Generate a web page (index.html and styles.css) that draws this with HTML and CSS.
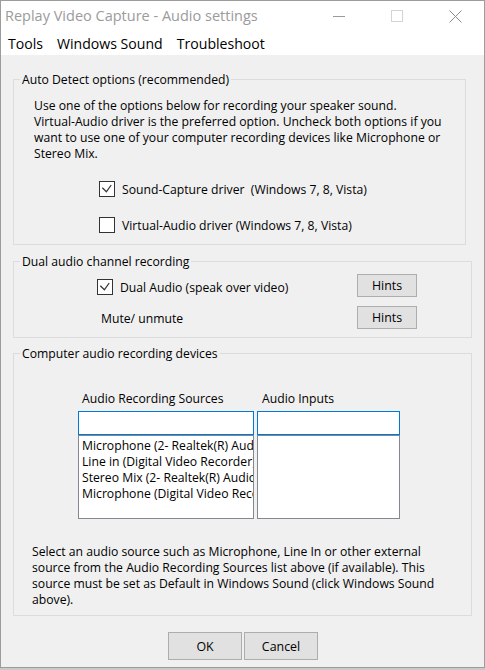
FILE: index.html
```html
<!DOCTYPE html>
<html>
<head>
<meta charset="utf-8">
<title>Replay Video Capture - Audio settings</title>
<link rel="stylesheet" href="styles.css">
</head>
<body>
<div class="win">
  <div class="titlebar">
    <div class="title">Replay Video Capture - Audio settings</div>
    <div class="capbtn">
      <svg width="12" height="12" viewBox="0 0 12 12"><line x1="0" y1="6.5" x2="12" y2="6.5" stroke="#9a9a9a" stroke-width="1"/></svg>
    </div>
    <div class="capbtn">
      <svg width="12" height="12" viewBox="0 0 12 12"><rect x="0.5" y="0.5" width="11" height="11" fill="none" stroke="#d4d4d4" stroke-width="1"/></svg>
    </div>
    <div class="capbtn">
      <svg width="13" height="13" viewBox="0 0 13 13"><path d="M0.5 0.5 L12.5 12.5 M12.5 0.5 L0.5 12.5" stroke="#8a8a8a" stroke-width="1" fill="none"/></svg>
    </div>
  </div>
  <div class="menubar">
    <span class="menuitem">Tools</span>
    <span class="menuitem">Windows Sound</span>
    <span class="menuitem">Troubleshoot</span>
  </div>
  <div class="content">
    <div class="group g1">
      <div class="legend">Auto Detect options (recommended)</div>
      <p class="desc">Use one of the options below for recording your speaker sound.<br>Virtual-Audio driver is the preferred option. Uncheck both options if you<br>want to use one of your computer recording devices like Microphone or<br>Stereo Mix.</p>
      <div class="checkrow first">
        <span class="box checked"><svg width="14" height="14" viewBox="0 0 14 14"><path d="M2.3 5.8 L6.4 9.8 L11.2 3" fill="none" stroke="#3a3a3a" stroke-width="1.3"/></svg></span>
        <span class="lbl">Sound-Capture driver&nbsp; (Windows 7, 8, Vista)</span>
      </div>
      <div class="checkrow second">
        <span class="box"></span>
        <span class="lbl">Virtual-Audio driver (Windows 7, 8, Vista)</span>
      </div>
    </div>

    <div class="group g2">
      <div class="legend">Dual audio channel recording</div>
      <div class="dualrow r1">
        <div class="left">
          <span class="box checked"><svg width="14" height="14" viewBox="0 0 14 14"><path d="M2.3 5.8 L6.4 9.8 L11.2 3" fill="none" stroke="#3a3a3a" stroke-width="1.3"/></svg></span>
          <span class="lbl">Dual Audio (speak over video)</span>
        </div>
        <button class="btn hints">Hints</button>
      </div>
      <div class="dualrow r2">
        <div class="left mute">Mute/ unmute</div>
        <button class="btn hints">Hints</button>
      </div>
    </div>

    <div class="group g3">
      <div class="legend">Computer audio recording devices</div>
      <div class="cols">
        <div class="col c1">
          <div class="collabel">Audio Recording Sources</div>
          <div class="edit"></div>
          <div class="list">
            <div class="item">Microphone (2- Realtek(R) Audio)</div>
            <div class="item">Line in (Digital Video Recorder)</div>
            <div class="item">Stereo Mix (2- Realtek(R) Audio)</div>
            <div class="item">Microphone (Digital Video Recorder)</div>
          </div>
        </div>
        <div class="col c2">
          <div class="collabel l2">Audio Inputs</div>
          <div class="edit"></div>
          <div class="list"></div>
        </div>
      </div>
      <p class="note">Select an audio source such as Microphone, Line In or other external<br>source from the Audio Recording Sources list above (if available). This<br>source must be set as Default in Windows Sound (click Windows Sound<br>above).</p>
    </div>

    <div class="actions">
      <button class="btn big">OK</button>
      <button class="btn big">Cancel</button>
    </div>
  </div>
</div>
</body>
</html>
```
FILE: styles.css
```css
html, body {
  margin: 0;
  padding: 0;
}
body {
  background: #c9c9c9;
  font-family: "Open Sans", "Noto Sans", sans-serif;
  color: #000;
}
.win {
  width: 485px;
  height: 668px;
  box-sizing: border-box;
  border: 1px solid #9c9c9c;
  background: #f0f0f0;
  display: flex;
  flex-direction: column;
  overflow: hidden;
}
.titlebar {
  height: 30px;
  background: #fff;
  display: flex;
  align-items: center;
}
.title {
  flex: 1;
  padding-left: 4px;
  font-size: 14.5px;
  color: #9b9b9b;
  line-height: 30px;
  white-space: nowrap;
}
.capbtn {
  width: 58px;
  height: 30px;
  display: flex;
  align-items: center;
  justify-content: center;
}
.capbtn svg { display: block; }
.menubar {
  height: 24px;
  background: #fff;
  display: flex;
  box-sizing: border-box;
  padding-top: 2px;
}
.menuitem {
  padding: 0 7px;
  font-size: 14.1px;
  line-height: 22px;
  white-space: nowrap;
}
.content {
  flex: 1;
  padding: 0 12px;
  font-size: 12.2px;
  line-height: 16px;
}
.group {
  border: 1px solid #dcdcdc;
}
.g1 {
  width: 453px;
  box-sizing: border-box;
  margin-top: 24px;
  padding-bottom: 11px;
}
.g2 {
  width: 459px;
  box-sizing: border-box;
  margin-top: 16px;
  padding-bottom: 8px;
}
.g3 {
  width: 459px;
  box-sizing: border-box;
  margin-top: 15px;
  padding-bottom: 7px;
}
.legend {
  display: table;
  margin: -8px 0 0 6px;
  padding: 0 2px;
  height: 16px;
  line-height: 16px;
  background: #f0f0f0;
  white-space: nowrap;
}
.desc {
  margin: 10px 0 0 0;
  padding-left: 20px;
  white-space: nowrap;
}
.checkrow {
  display: flex;
  align-items: center;
  gap: 7px;
  height: 16px;
  padding-left: 85px;
}
.checkrow.first { margin-top: 19px; }
.checkrow.second { margin-top: 20px; }
.box {
  width: 16px;
  height: 16px;
  box-sizing: border-box;
  border: 1px solid #333;
  background: #fff;
  flex: none;
  display: block;
}
.box svg { display: block; }
.lbl {
  white-space: nowrap;
  line-height: 16px;
  padding-top: 2px;
}
.dualrow {
  display: flex;
  align-items: center;
  height: 23px;
  padding-left: 83px;
}
.dualrow.r1 { margin-top: 4px; }
.dualrow.r2 { margin-top: 9px; }
.left {
  width: 260px;
  display: flex;
  align-items: center;
  gap: 7px;
}
.r1 .left { margin-top: 3px; }
.left.mute {
  padding-left: 4px;
  box-sizing: border-box;
  padding-top: 2px;
}
.btn {
  font-family: "Open Sans", "Noto Sans", sans-serif;
  font-size: 12.4px;
  color: #000;
  background: #e1e1e1;
  border: 1px solid #adadad;
  border-radius: 0;
  padding: 0;
  margin: 0;
  box-sizing: border-box;
}
.hints {
  width: 60px;
  height: 23px;
}
.cols {
  display: flex;
  gap: 3px;
  margin-top: 29px;
  padding-left: 64px;
}
.c1 { width: 176px; }
.c2 { width: 143px; }
.collabel {
  padding-left: 4px;
  line-height: 16px;
  white-space: nowrap;
}
.collabel.l2 { padding-left: 5px; }
.edit {
  margin-top: 4px;
  height: 24px;
  box-sizing: border-box;
  border: 1px solid #0078d7;
  background: #fff;
}
.list {
  height: 84px;
  box-sizing: border-box;
  border: 1px solid #828790;
  background: #fff;
  padding: 2px 0 0 3px;
  overflow: hidden;
}
.item {
  white-space: nowrap;
  overflow: hidden;
  line-height: 16px;
}
.note {
  margin: 25px 0 0 0;
  padding-left: 18px;
  white-space: nowrap;
}
.actions {
  display: flex;
  justify-content: center;
  gap: 2px;
  margin-top: 16px;
  padding-left: 1px;
}
.big {
  width: 74px;
  height: 28px;
}
```
